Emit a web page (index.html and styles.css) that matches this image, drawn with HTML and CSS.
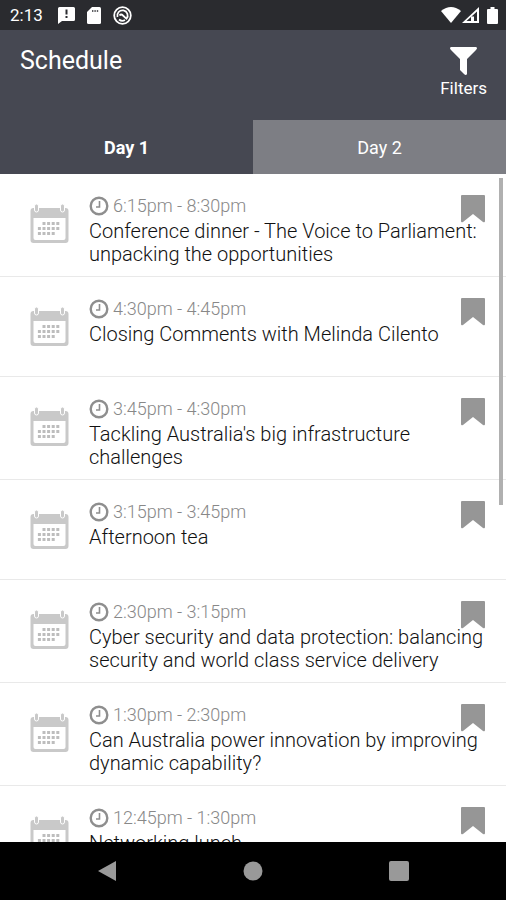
FILE: index.html
```html
<!DOCTYPE html>
<html lang="en">
<head>
  <meta charset="UTF-8" />
  <meta name="viewport" content="width=device-width, initial-scale=1.0" />
  <title>Schedule</title>
  <link rel="stylesheet" href="styles.css">
</head>
<body>
  <svg class="sprite" aria-hidden="true">
    <symbol id="calendar" viewBox="0 0 38 40">
      <path fill="#c9c9c9" fill-rule="evenodd" d="M3 5h32a3 3 0 0 1 3 3v29a3 3 0 0 1-3 3H3a3 3 0 0 1-3-3V8a3 3 0 0 1 3-3zM3 15v20a2 2 0 0 0 2 2h28a2 2 0 0 0 2-2V15z" />
      <path fill="#c9c9c9" stroke="#fff" d="M4 3a2 2 0 0 1 4 0v4a2 2 0 0 1-4 0zM30 3a2 2 0 0 1 4 0v4a2 2 0 0 1-4 0z" />
      <path fill="none" stroke="#bdbdbd" stroke-width="3" stroke-dasharray="3 1.6" d="M12 20.500h18M7.400 25.500h23M7.400 30.500h18" />
    </symbol>
    <symbol id="clock" viewBox="0 0 20 20">
      <circle cx="10" cy="10" r="8.300" fill="none" stroke="#8e8e8e" stroke-width="2.400" />
      <path fill="none" stroke="#8e8e8e" stroke-width="1.600" d="M10.500 5v6H7" />
    </symbol>
    <symbol id="bookmark" viewBox="0 0 24 28">
      <path fill="#969696" d="M1 0h22q1 0 1 1v25q0 2-2 1l-10-8-10 8q-2 1-2-1V1q0-1 1-1z" />
    </symbol>
  </svg>

  <div class="status-bar">
    <span class="status-time">2:13</span>
    <svg width="17" height="17" viewBox="0 0 17 17">
      <path fill="#fff" fill-rule="evenodd" d="M1.500 0h14Q17 0 17 1.500v11q0 1.500-1.500 1.500H4l-4 3V1.500Q0 0 1.500 0zM7.500 2.500v5h2v-5zM7.500 9v2h2V9z" />
    </svg>
    <svg width="14" height="17" viewBox="0 0 14 17">
      <path fill="#fff" d="M5 0h7.500Q14 0 14 1.500v14q0 1.500-1.500 1.500h-11Q0 17 0 15.500V5z" />
      <path stroke="#2a2b2f" stroke-width="1.400" stroke-dasharray="1.400 1" d="M5 4h7" />
    </svg>
    <svg width="19" height="19" viewBox="0 0 19 19" fill="none" stroke="#fff">
      <circle cx="9.500" cy="9.500" r="8.300" stroke-width="1.800" />
      <path stroke-width="1.800" d="M4.500 11a5.200 5.200 0 1 1 9 1.800L10 9.500Q8 7.500 6.500 9.500M6 13.500q3 2.500 6 .5" />
    </svg>
    <div class="status-right">
      <svg width="20" height="16" viewBox="0 0 20 16">
        <path fill="#fff" d="M0 4Q10-4 20 4L10 16z" />
      </svg>
      <svg width="17" height="16" viewBox="0 0 17 16">
        <path fill="#fff" fill-rule="evenodd" d="M17 0v16H0zM15 4.500 4.500 14H9V9.500h3V14h3z" />
      </svg>
      <svg class="battery" width="11" height="17" viewBox="0 0 11 17">
        <path fill="#fff" d="M3.500 0h4v2H10q1 0 1 1v13q0 1-1 1H1q-1 0-1-1V3q0-1 1-1h2.500z" />
      </svg>
    </div>
  </div>

  <header class="header">
    <h1>Schedule</h1>
    <button class="filters" type="button">
      <svg width="27" height="28" viewBox="0 0 27 28">
        <path fill="#fff" d="M1 0h25q2 1 0 3l-9 9v15q-1 2-3 0l-4-4V12L1 3q-2-2 0-3z" />
      </svg>
      Filters
    </button>
  </header>

  <nav class="tabs">
    <button class="tab active" type="button">Day 1</button>
    <button class="tab" type="button">Day 2</button>
  </nav>

  <main class="schedule">
    <ul class="sessions" id="sessions"></ul>
    <div class="scrollbar"></div>
  </main>

  <footer class="nav-bar">
    <button type="button" aria-label="Back">
      <svg width="20" height="22" viewBox="0 0 20 22"><path fill="#999" d="M19 1v20L1 11z" /></svg>
    </button>
    <button type="button" aria-label="Home">
      <svg width="20" height="20" viewBox="0 0 20 20"><circle cx="10" cy="10" r="9.500" fill="#999" /></svg>
    </button>
    <button type="button" aria-label="Recent apps">
      <svg width="20" height="20" viewBox="0 0 20 20"><rect width="20" height="20" rx="2" fill="#999" /></svg>
    </button>
  </footer>

  <script>
    const sessions = [
      { time: '6:15pm - 8:30pm', title: 'Conference dinner - The Voice to Parliament: unpacking the opportunities' },
      { time: '4:30pm - 4:45pm', title: 'Closing Comments with Melinda Cilento' },
      { time: '3:45pm - 4:30pm', title: "Tackling Australia's big infrastructure challenges" },
      { time: '3:15pm - 3:45pm', title: 'Afternoon tea' },
      { time: '2:30pm - 3:15pm', title: 'Cyber security and data protection: balancing security and world class service delivery' },
      { time: '1:30pm - 2:30pm', title: 'Can Australia power innovation by improving dynamic capability?' },
      { time: '12:45pm - 1:30pm', title: 'Networking lunch' }
    ];

    const list = document.getElementById('sessions');

    sessions.forEach(session => {
      const item = document.createElement('li');
      item.className = 'session';
      item.innerHTML = `
        <svg class="calendar"><use href="#calendar" /></svg>
        <div class="details">
          <div class="time"><svg class="clock"><use href="#clock" /></svg>${session.time}</div>
          <h2>${session.title}</h2>
        </div>
        <button class="bookmark" type="button" aria-label="Bookmark"><svg><use href="#bookmark" /></svg></button>
      `;
      list.appendChild(item);
    });
  </script>
</body>
</html>
```
FILE: styles.css
```css
* {
  box-sizing: border-box;
}

body {
  font-family: Roboto, "Liberation Sans", sans-serif;
  background-color: #fff;
  color: #111;
  margin: 0;
  height: 100vh;
  display: flex;
  flex-direction: column;
  overflow: hidden;
}

button {
  font: inherit;
  color: inherit;
  background: none;
  border: 0;
  padding: 0;
}

svg {
  display: block;
  flex: none;
}

.sprite {
  position: absolute;
  width: 0;
  height: 0;
}

.status-bar {
  display: flex;
  align-items: center;
  gap: 12px;
  height: 30px;
  flex: none;
  padding: 0 8px 0 10px;
  background-color: #2a2b2f;
  color: #fff;
}

.status-time {
  font-size: 17px;
  margin-right: 3px;
}

.status-right {
  display: flex;
  align-items: center;
  gap: 1px;
  margin-left: auto;
}

.battery {
  margin-left: 7px;
}

.header {
  display: flex;
  justify-content: space-between;
  align-items: flex-start;
  height: 90px;
  flex: none;
  padding: 17px 19px 0 20px;
  background-color: #464852;
  color: #fff;
}

h1 {
  margin: 0;
  font-size: 25px;
  font-weight: 400;
  line-height: 28px;
}

.filters {
  display: flex;
  flex-direction: column;
  align-items: center;
  gap: 3px;
  font-size: 17px;
  line-height: 20px;
}

.tabs {
  display: flex;
  height: 54px;
  flex: none;
}

.tab {
  flex: 1;
  background-color: #7d7e84;
  color: #fff;
  font-size: 18px;
}

.tab.active {
  background-color: #464852;
  font-weight: 700;
}

.schedule {
  position: relative;
  flex: 1;
  min-height: 0;
  overflow: hidden;
}

.sessions {
  list-style: none;
  margin: 0;
  padding: 0;
}

.session {
  position: relative;
  display: flex;
  gap: 20px;
  min-height: 100px;
  padding: 20px 20px 10px 30px;
  border-bottom: 1px solid #e9e9e9;
}

.calendar {
  width: 39px;
  height: 40px;
  margin-top: 9px;
}

.details {
  flex: 1;
}

.time {
  display: flex;
  align-items: center;
  gap: 4px;
  font-size: 18px;
  font-weight: 300;
  line-height: 24px;
  color: #888;
}

.clock {
  width: 20px;
  height: 20px;
}

h2 {
  margin: 2px 0 0;
  font-size: 20px;
  font-weight: 300;
  line-height: 23px;
}

.bookmark {
  position: absolute;
  top: 21px;
  right: 21px;
}

.bookmark svg {
  width: 24px;
  height: 28px;
}

.scrollbar {
  position: absolute;
  top: 4px;
  right: 3px;
  width: 4px;
  height: 49%;
  background-color: #b0b0b0;
}

.nav-bar {
  display: flex;
  justify-content: center;
  align-items: center;
  gap: 126px;
  height: 58px;
  flex: none;
  background-color: #000;
}
```
